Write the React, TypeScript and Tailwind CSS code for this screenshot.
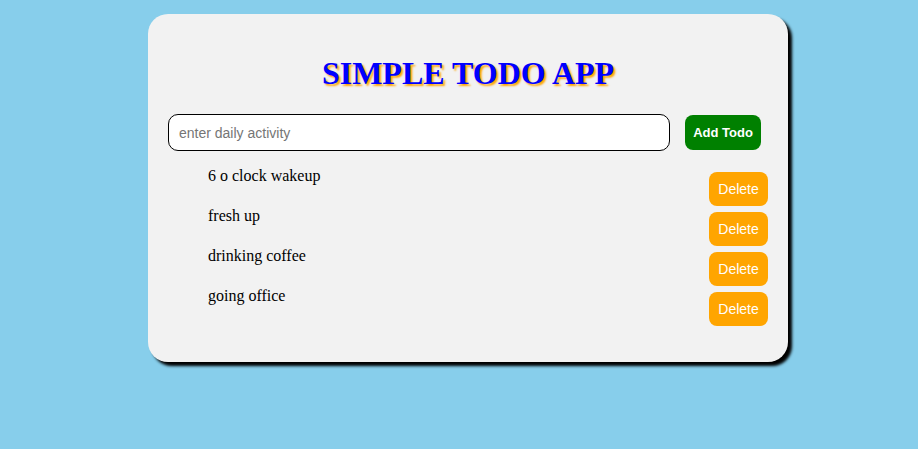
import React from "react";

const items = ["6 o clock wakeup", "fresh up", "drinking coffee", "going office"];

export default function App() {
  return (
    <div className="w-full min-h-[449px] bg-[#87ceeb] pt-[14px]">
      <div className="mx-auto w-[640px] h-[348px] bg-[#f2f2f2] rounded-[20px] shadow-[4px_4px_3px_#000] px-[20px] pt-[41px] translate-x-[9px]">
        <h1
          className="text-center text-[32px] leading-[37px] font-bold text-[#0000ff] [text-shadow:2px_2px_2px_orange]"
          style={{ fontFamily: '"Liberation Serif", "Times New Roman", serif' }}
        >
          SIMPLE TODO APP
        </h1>
        <div className="flex items-center mt-[22px] gap-[15px]">
          <input
            placeholder="enter daily activity"
            className="w-[502px] h-[37px] border border-black rounded-[10px] bg-white px-[10px] text-[14px] placeholder:text-[#757575] outline-none"
            style={{ fontFamily: '"Liberation Sans", Arial, sans-serif' }}
          />
          <button
            className="w-[76px] h-[35px] bg-[#008000] text-white font-bold text-[13px] rounded-[8px]"
            style={{ fontFamily: '"Liberation Sans", Arial, sans-serif' }}
          >
            Add Todo
          </button>
        </div>
        <ul className="mt-[16px] pl-[40px]">
          {items.map((t) => (
            <li key={t} className="flex justify-between items-start h-[40px]">
              <span
                className="text-[16px] leading-[18px] text-black"
                style={{ fontFamily: '"Liberation Serif", "Times New Roman", serif' }}
              >
                {t}
              </span>
              <button
                className="mt-[5px] w-[59px] h-[34px] bg-[#ffa500] text-white text-[14px] rounded-[8px]"
                style={{ fontFamily: '"Liberation Sans", Arial, sans-serif' }}
              >
                Delete
              </button>
            </li>
          ))}
        </ul>
      </div>
    </div>
  );
}
